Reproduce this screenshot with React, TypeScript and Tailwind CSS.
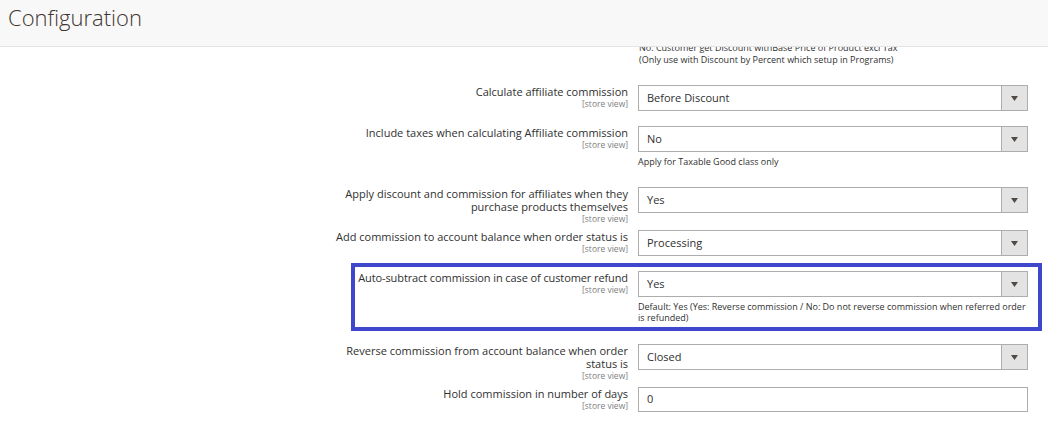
import React from 'react';

type Field = {
    label: string[];
    value: string;
    note?: string[];
    input?: boolean;
};

function SelectBox({ value }: { value: string }) {
    return (
        <div className="flex h-[26px] w-[390px] border border-[#adadad] bg-white">
            <div className="flex flex-1 items-center pl-[8px] text-[11px] text-[#303030]">{value}</div>
            <div className="flex w-[26px] items-center justify-center border-l border-[#adadad] bg-[#e3e3e3]">
                <svg width="7" height="5" viewBox="0 0 7 5">
                    <path d="M0 0h7L3.5 5z" fill="#514943" />
                </svg>
            </div>
        </div>
    );
}

function TextBox({ value }: { value: string }) {
    return (
        <div className="flex h-[25px] w-[390px] items-center border border-[#adadad] bg-white pl-[8px] text-[11px] text-[#303030]">
            {value}
        </div>
    );
}

function Row({ field, tight }: { field: Field; tight?: boolean }) {
    return (
        <div className="flex items-start">
            <div className="flex min-w-0 flex-1 justify-end pr-[10px]">
                <div className={tight ? 'text-right tracking-[-0.1px]' : 'w-[292px] text-right'}>
                    {field.label.map((l, i) => (
                        <div key={i} className="text-[11px] leading-[13px] text-[#303030]">{l}</div>
                    ))}
                    <div className="text-[8.5px] leading-[11px] tracking-normal text-[#808080]">[store view]</div>
                </div>
            </div>
            <div className="w-[390px] shrink-0">
                {field.input ? <TextBox value={field.value} /> : <SelectBox value={field.value} />}
                {field.note && (
                    <div className="mt-[4px]">
                        {field.note.map((n, i) => (
                            <div key={i} className="text-[9px] leading-[11px] text-[#303030]">{n}</div>
                        ))}
                    </div>
                )}
            </div>
        </div>
    );
}

export default function App() {
    return (
        <div className="relative h-[422px] w-[1048px] overflow-hidden bg-white" style={{ fontFamily: '"Open Sans", "Noto Sans", sans-serif' }}>
            {/* Page header */}
            <div className="relative z-10 flex h-[47px] items-start border-b border-[#e3e3e3] bg-[#f8f8f8] pl-[8px] pt-[1px]">
                <h1 className="text-[22px] font-light text-[#41362f]">Configuration</h1>
            </div>

            {/* Previous note, partly under header */}
            <div className="-mt-[5px] ml-[639px] text-[9px] leading-[12px] text-[#303030]">
                <div>No: Customer get Discount withBase Price of Product excl Tax</div>
                <div>(Only use with Discount by Percent which setup in Programs)</div>
            </div>

            <div className="mr-[20px] mt-[19px]">
                <Row field={{ label: ['Calculate affiliate commission'], value: 'Before Discount' }} />
            </div>
            <div className="mr-[20px] mt-[15px]">
                <Row field={{ label: ['Include taxes when calculating Affiliate commission'], value: 'No', note: ['Apply for Taxable Good class only'] }} />
            </div>
            <div className="mr-[20px] mt-[20px]">
                <Row field={{ label: ['Apply discount and commission for affiliates when they', 'purchase products themselves'], value: 'Yes' }} />
            </div>
            <div className="mr-[20px] mt-[6px]">
                <Row field={{ label: ['Add commission to account balance when order status is'], value: 'Processing' }} />
            </div>

            {/* Highlighted row */}
            <div className="ml-[351px] mt-[7px] w-[691px] border-4 border-[#3f48cc] pb-[4px] pr-[10px] pt-[4px]">
                <Row
                    tight
                    field={{
                        label: ['Auto-subtract commission in case of customer refund'],
                        value: 'Yes',
                        note: ['Default: Yes (Yes: Reverse commission / No: Do not reverse commission when referred order', 'is refunded)'],
                    }}
                />
            </div>

            <div className="mr-[20px] mt-[13px]">
                <Row field={{ label: ['Reverse commission from account balance when order', 'status is'], value: 'Closed' }} />
            </div>
            <div className="mr-[20px] mt-[6px]">
                <Row field={{ label: ['Hold commission in number of days'], value: '0', input: true }} />
            </div>
        </div>
    );
}
